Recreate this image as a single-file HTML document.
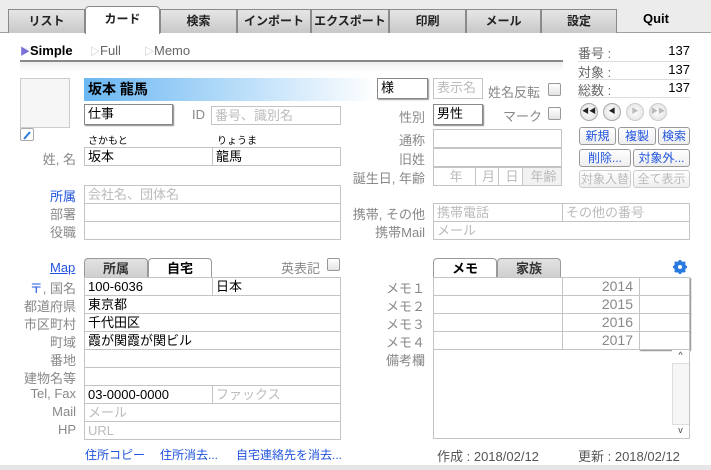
<!DOCTYPE html>
<html><head><meta charset="utf-8"><style>
*{box-sizing:border-box;margin:0;padding:0}
body{width:711px;height:470px;background:#fff;font-family:"Liberation Sans","Noto Sans CJK JP",sans-serif;font-size:13px;color:#000;position:relative;overflow:hidden}
.a{position:absolute;white-space:nowrap}
.topbar{position:absolute;left:0;top:0;width:711px;height:33px;background:#ececec;border-bottom:1px solid #a0a0a0}
.tab{position:absolute;top:9px;height:24px;border:1px solid #8a8a8a;border-bottom:none;background:linear-gradient(#e6e6e6,#c8c8c8);font-weight:bold;font-size:12px;text-align:center;line-height:22px;color:#222}
.tab.on{top:6px;height:28px;background:#fff;border-radius:4px 4px 0 0;line-height:24px}
.in{position:absolute;border:1px solid #c4c4c4;background:#fff;height:19px;line-height:17px;padding-left:3px;font-size:13px;white-space:nowrap;overflow:hidden}
.ph{color:#bbb}
.lb{position:absolute;color:#888;text-align:right;font-size:13px;white-space:nowrap}
.blu{color:#2255dd}
.cb{position:absolute;width:13px;height:13px;border:1px solid #999;border-radius:2px;background:linear-gradient(#fff,#e4e4e4)}
.btn{position:absolute;height:18px;border:1px solid #999;border-radius:3px;background:linear-gradient(#fff,#eee);color:#2255dd;text-align:center;line-height:16px;font-size:12px}
.btn.d{color:#bbb;border-color:#ccc}
.circ{position:absolute;top:103px;width:18px;height:18px;border-radius:50%;border:1px solid #aaa;background:radial-gradient(#fff,#ddd);font-size:7px;text-align:center;line-height:16px;color:#222}
.stab{position:absolute;top:258px;height:20px;border:1px solid #999;border-bottom:none;border-radius:4px 4px 0 0;background:linear-gradient(#e2e2e2,#cfcfcf);font-weight:bold;text-align:center;line-height:19px;color:#333}
.stab.on{background:#fff;color:#000}
.link{position:absolute;color:#2255dd;font-size:12px;white-space:nowrap}
</style></head><body>
<div class="topbar"></div>
<div class="tab" style="left:8px;width:77px">リスト</div>
<div class="tab on" style="left:85px;width:75px">カード</div>
<div class="tab" style="left:160px;width:77px">検索</div>
<div class="tab" style="left:237px;width:74px">インポート</div>
<div class="tab" style="left:311px;width:78px">エクスポート</div>
<div class="tab" style="left:389px;width:77px">印刷</div>
<div class="tab" style="left:466px;width:75px">メール</div>
<div class="tab" style="left:541px;width:76px">設定</div>
<div class="a" style="left:617px;top:11px;width:78px;text-align:center;font-weight:bold;font-size:13px">Quit</div>

<div class="a" style="left:20px;top:43px;font-size:13px"><span style="color:#7a70d8;font-size:10px">▶</span><b>Simple</b></div>
<div class="a" style="left:90px;top:43px;font-size:13px;color:#666"><span style="color:#bbb;font-size:10px">▷</span>Full</div>
<div class="a" style="left:144px;top:43px;font-size:13px;color:#666"><span style="color:#bbb;font-size:10px">▷</span>Memo</div>
<div class="a" style="left:20px;top:60px;width:543px;height:2px;background:#888"></div>
<div class="a" style="left:20px;top:62px;width:543px;height:10px;background:linear-gradient(#eee,#fff)"></div>

<div class="a" style="left:578px;top:43px;width:112px;font-size:13px;color:#666">番号 :<span style="position:absolute;right:0;color:#000">137</span></div>
<div class="a" style="left:578px;top:61px;width:112px;height:1px;background:#ddd"></div>
<div class="a" style="left:578px;top:62px;width:112px;font-size:13px;color:#666">対象 :<span style="position:absolute;right:0;color:#000">137</span></div>
<div class="a" style="left:578px;top:79px;width:112px;height:1px;background:#ddd"></div>
<div class="a" style="left:578px;top:80px;width:112px;font-size:13px;color:#666">総数 :<span style="position:absolute;right:0;color:#000">137</span></div>
<div class="a" style="left:578px;top:97px;width:112px;height:1px;background:#ddd"></div>
<div class="circ" style="left:580px">◀◀</div>
<div class="circ" style="left:603px">◀</div>
<div class="circ" style="left:626px;color:#bbb;border-color:#ccc">▶</div>
<div class="circ" style="left:649px;color:#bbb;border-color:#ccc">▶▶</div>
<div class="btn" style="left:579px;top:127px;width:37px">新規</div>
<div class="btn" style="left:618px;top:127px;width:38px">複製</div>
<div class="btn" style="left:658px;top:127px;width:32px">検索</div>
<div class="btn" style="left:579px;top:149px;width:52px">削除...</div>
<div class="btn" style="left:633px;top:149px;width:57px">対象外...</div>
<div class="btn d" style="left:579px;top:170px;width:52px">対象入替</div>
<div class="btn d" style="left:633px;top:170px;width:57px">全て表示</div>

<div class="a" style="left:20px;top:78px;width:50px;height:50px;border:1px solid #ccc;background:#f6f6f6"></div>
<div class="a" style="left:20px;top:128px;width:14px;height:13px;border:1px solid #aaa;border-radius:2px;background:#fff"><svg width="12" height="11" viewBox="0 0 12 11"><path d="M3 9 L9 2" stroke="#2a7ae0" stroke-width="2"/></svg></div>

<div class="a" style="left:84px;top:78px;width:293px;height:23px;background:linear-gradient(90deg,#6ab7f2,#fff);font-weight:bold;font-size:14px;line-height:23px;padding-left:4px">坂本 龍馬</div>
<div class="in" style="left:377px;top:78px;width:51px;height:21px;border-color:#888;box-shadow:1px 1px 1px #999">様</div>
<div class="in ph" style="left:433px;top:78px;width:50px;height:21px">表示名</div>
<div class="lb" style="left:460px;top:82px;width:80px">姓名反転</div>
<div class="cb" style="left:548px;top:83px"></div>

<div class="in" style="left:84px;top:104px;width:89px;height:21px;border-color:#888;box-shadow:1px 1px 1px #888">仕事</div>
<div class="lb" style="left:185px;top:107px;width:20px">ID</div>
<div class="in ph" style="left:211px;top:106px;width:130px">番号、識別名</div>
<div class="lb" style="left:380px;top:107px;width:45px">性別</div>
<div class="in" style="left:433px;top:104px;width:50px;height:21px;border-color:#888;box-shadow:1px 1px 1px #888">男性</div>
<div class="lb" style="left:480px;top:106px;width:62px">マーク</div>
<div class="cb" style="left:548px;top:107px"></div>

<div class="a" style="left:88px;top:132px;font-size:10px">さかもと</div>
<div class="a" style="left:217px;top:132px;font-size:10px">りょうま</div>
<div class="lb" style="left:20px;top:149px;width:56px">姓, 名</div>
<div class="in" style="left:84px;top:147px;width:129px">坂本</div>
<div class="in" style="left:212px;top:147px;width:129px">龍馬</div>

<div class="lb" style="left:360px;top:130px;width:65px">通称</div>
<div class="in" style="left:433px;top:129px;width:129px"></div>
<div class="lb" style="left:360px;top:149px;width:65px">旧姓</div>
<div class="in" style="left:433px;top:148px;width:129px"></div>
<div class="lb" style="left:330px;top:168px;width:95px">誕生日, 年齢</div>
<div class="in ph" style="left:433px;top:167px;width:43px;text-align:center">年</div>
<div class="in ph" style="left:475px;top:167px;width:24px;text-align:center">月</div>
<div class="in ph" style="left:498px;top:167px;width:25px;text-align:center">日</div>
<div class="in ph" style="left:522px;top:167px;width:40px;text-align:center;background:#f2f2f2">年齢</div>

<div class="lb blu" style="left:20px;top:186px;width:56px">所属</div>
<div class="in ph" style="left:84px;top:185px;width:257px">会社名、団体名</div>
<div class="lb" style="left:20px;top:204px;width:56px">部署</div>
<div class="in" style="left:84px;top:203px;width:257px"></div>
<div class="lb" style="left:20px;top:222px;width:56px">役職</div>
<div class="in" style="left:84px;top:221px;width:257px"></div>
<div class="lb" style="left:330px;top:204px;width:95px">携帯, その他</div>
<div class="in ph" style="left:433px;top:203px;width:130px">携帯電話</div>
<div class="in ph" style="left:562px;top:203px;width:128px">その他の番号</div>
<div class="lb" style="left:330px;top:222px;width:95px">携帯Mail</div>
<div class="in ph" style="left:433px;top:221px;width:257px">メール</div>

<div class="a blu" style="left:50px;top:260px;text-decoration:underline">Map</div>
<div class="stab" style="left:84px;width:64px">所属</div>
<div class="stab on" style="left:148px;width:64px">自宅</div>
<div class="lb" style="left:270px;top:258px;width:50px">英表記</div>
<div class="cb" style="left:327px;top:258px"></div>

<div class="lb" style="left:10px;top:278px;width:66px"><span class="blu">〒</span>, 国名</div>
<div class="in" style="left:84px;top:277px;width:129px">100-6036</div>
<div class="in" style="left:212px;top:277px;width:129px">日本</div>
<div class="lb" style="left:10px;top:296px;width:66px">都道府県</div>
<div class="in" style="left:84px;top:295px;width:257px">東京都</div>
<div class="lb" style="left:10px;top:314px;width:66px">市区町村</div>
<div class="in" style="left:84px;top:313px;width:257px">千代田区</div>
<div class="lb" style="left:10px;top:332px;width:66px">町域</div>
<div class="in" style="left:84px;top:331px;width:257px">霞が関霞が関ビル</div>
<div class="lb" style="left:10px;top:350px;width:66px">番地</div>
<div class="in" style="left:84px;top:349px;width:257px"></div>
<div class="lb" style="left:10px;top:368px;width:66px">建物名等</div>
<div class="in" style="left:84px;top:367px;width:257px"></div>
<div class="lb" style="left:10px;top:386px;width:66px">Tel, Fax</div>
<div class="in" style="left:84px;top:385px;width:129px">03-0000-0000</div>
<div class="in ph" style="left:212px;top:385px;width:129px">ファックス</div>
<div class="lb" style="left:10px;top:404px;width:66px">Mail</div>
<div class="in ph" style="left:84px;top:403px;width:257px">メール</div>
<div class="lb" style="left:10px;top:422px;width:66px">HP</div>
<div class="in ph" style="left:84px;top:421px;width:257px">URL</div>
<div class="link" style="left:85px;top:446px">住所コピー</div>
<div class="link" style="left:160px;top:446px">住所消去...</div>
<div class="link" style="left:236px;top:446px">自宅連絡先を消去...</div>

<div class="stab on" style="left:433px;width:64px">メモ</div>
<div class="stab" style="left:497px;width:64px">家族</div>
<svg class="a" style="left:673px;top:260px" width="14" height="14" viewBox="0 0 14 14"><circle cx="7" cy="7" r="4.5" fill="none" stroke="#2a7ae0" stroke-width="3"/><g stroke="#2a7ae0" stroke-width="2.5"><path d="M7 0v14M0 7h14M2 2l10 10M12 2L2 12"/></g><circle cx="7" cy="7" r="2" fill="#fff"/></svg>
<div class="lb" style="left:360px;top:278px;width:65px">メモ１</div>
<div class="lb" style="left:360px;top:296px;width:65px">メモ２</div>
<div class="lb" style="left:360px;top:314px;width:65px">メモ３</div>
<div class="lb" style="left:360px;top:332px;width:65px">メモ４</div>
<div class="in" style="left:433px;top:277px;width:130px"></div>
<div class="in" style="left:433px;top:295px;width:130px"></div>
<div class="in" style="left:433px;top:313px;width:130px"></div>
<div class="in" style="left:433px;top:331px;width:130px"></div>
<div class="in" style="left:562px;top:277px;width:78px;text-align:right;padding-right:6px;color:#888;font-size:14px">2014</div>
<div class="in" style="left:562px;top:295px;width:78px;text-align:right;padding-right:6px;color:#888;font-size:14px">2015</div>
<div class="in" style="left:562px;top:313px;width:78px;text-align:right;padding-right:6px;color:#888;font-size:14px">2016</div>
<div class="in" style="left:562px;top:331px;width:78px;text-align:right;padding-right:6px;color:#888;font-size:14px">2017</div>
<div class="in" style="left:639px;top:277px;width:51px;box-shadow:1px 1px 1px #888"></div>
<div class="in" style="left:639px;top:295px;width:51px;box-shadow:1px 1px 1px #888"></div>
<div class="in" style="left:639px;top:313px;width:51px;box-shadow:1px 1px 1px #888"></div>
<div class="in" style="left:639px;top:331px;width:51px;box-shadow:1px 1px 1px #888"></div>
<div class="lb" style="left:360px;top:350px;width:65px">備考欄</div>
<div class="a" style="left:433px;top:349px;width:257px;height:90px;border:1px solid #c4c4c4"></div>
<div class="a" style="left:672px;top:350px;width:17px;height:88px;border-left:1px solid #ddd;background:#f6f6f6"></div>
<div class="a" style="left:672px;top:350px;width:17px;height:14px;background:#fff;border-bottom:1px solid #ddd;font-size:9px;text-align:center;color:#444">^</div>
<div class="a" style="left:672px;top:424px;width:17px;height:14px;background:#fff;border-top:1px solid #ddd;font-size:9px;text-align:center;color:#444">v</div>
<div class="a" style="left:437px;top:446px;color:#555">作成 : 2018/02/12</div>
<div class="a" style="left:578px;top:446px;color:#555">更新 : 2018/02/12</div>
<div class="a" style="left:0;top:465px;width:711px;height:5px;background:#e6e6e6"></div>
</body></html>
